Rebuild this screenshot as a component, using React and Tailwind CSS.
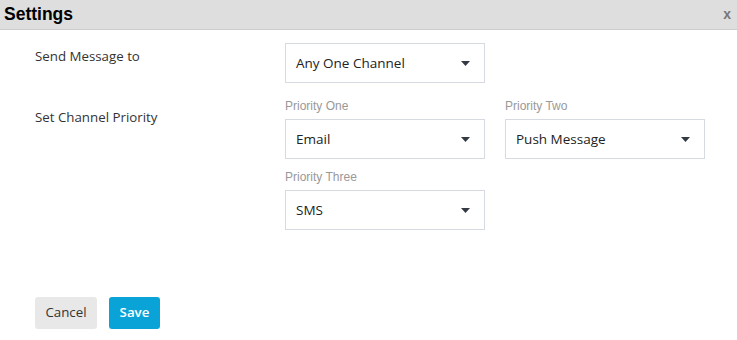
import { useState } from 'react';

const Caret = () => (
  <svg width="9" height="5" viewBox="0 0 9 5" className="shrink-0">
    <path d="M0 0h9L4.5 5z" fill="#333a44" />
  </svg>
);

const Select = ({ value }) => (
  <div className="w-[200px] h-10 border border-[#d6dbe1] bg-white flex items-center justify-between pl-[10px] pr-[14px] pt-[1px] text-[13.5px] text-[#222]">
    <span>{value}</span>
    <Caret />
  </div>
);

const Field = ({ label, value }) => (
  <div className="flex flex-col">
    <div className="h-4 leading-4 mb-[5px] text-[12px] text-[#999] font-['Liberation_Sans',Arial,sans-serif]">{label}</div>
    <Select value={value} />
  </div>
);

export default function App() {
  const [open, setOpen] = useState(true);
  if (!open) return null;

  return (
    <div className="w-[737px] h-[340px] bg-white font-['Open_Sans',sans-serif] text-[#333]">
      <div className="h-[30px] bg-[#dedede] border-b border-[#cdcdcd] flex items-center justify-between pl-[4px] pr-[6px]">
        <h2 className="text-[17.5px] font-bold text-black font-['Liberation_Sans',Arial,sans-serif]">Settings</h2>
        <button onClick={() => setOpen(false)} className="text-[14px] font-bold text-[#777] font-['Liberation_Sans',Arial,sans-serif] leading-none mb-[2px]">x</button>
      </div>

      <div className="pl-[35px] pt-[13px]">
        <div className="flex">
          <div className="w-[250px] pt-[3px] leading-5 text-[13.3px]">Send Message to</div>
          <Select value="Any One Channel" />
        </div>

        <div className="flex mt-[15px]">
          <div className="w-[250px] pt-[9px] leading-5 text-[13.3px]">Set Channel Priority</div>
          <div className="grid grid-cols-[200px_200px] gap-x-5 gap-y-[10px]">
            <Field label="Priority One" value="Email" />
            <Field label="Priority Two" value="Push Message" />
            <Field label="Priority Three" value="SMS" />
          </div>
        </div>

        <div className="flex gap-3 mt-[67px]">
          <button className="w-[62px] h-8 rounded-[3px] bg-[#e8e8e8] text-[13.3px] text-[#333]">Cancel</button>
          <button className="w-[51px] h-8 rounded-[3px] bg-[#0aa3d8] text-[13.3px] font-semibold text-white">Save</button>
        </div>
      </div>
    </div>
  );
}
